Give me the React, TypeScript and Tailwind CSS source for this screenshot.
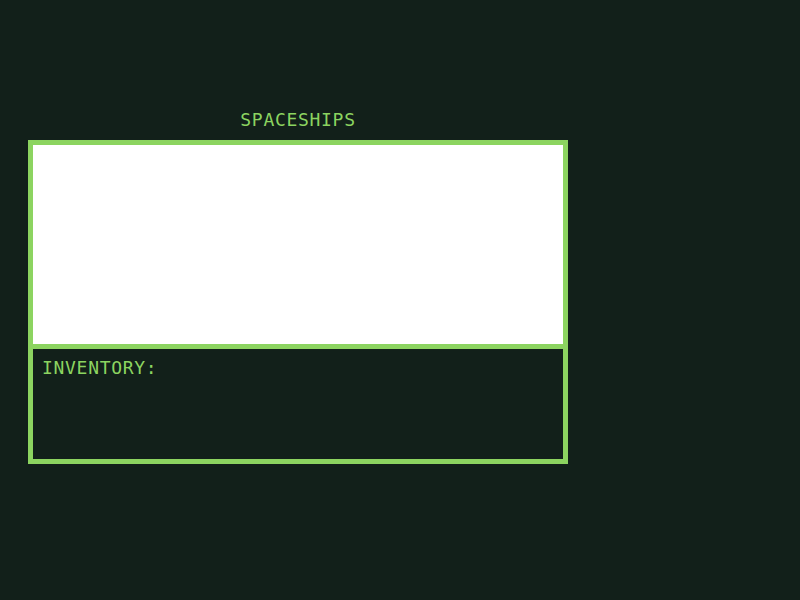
export default function App() {
  return (
    <div className="min-h-screen w-full bg-[#12201a] pt-[111px] pl-[28px]">
      <div className="flex w-[540px] flex-col">
        <h1
          className="h-[18px] text-center text-[18px] leading-[18px] tracking-[0.7px] text-[#8cd460]"
          style={{ fontFamily: "'DejaVu Sans Mono', monospace" }}
        >
          SPACESHIPS
        </h1>

        <div className="mt-[11px] flex flex-col border-[5px] border-[#8cd460]">
          {/* ship view */}
          <div className="h-[199px] bg-white" />

          {/* inventory */}
          <div className="h-[115px] border-t-[5px] border-[#8cd460] bg-[#12201a] pl-[9px] pt-[10px]">
            <p
              className="text-[18px] leading-[18px] tracking-[0.7px] text-[#8cd460]"
              style={{ fontFamily: "'DejaVu Sans Mono', monospace" }}
            >
              INVENTORY:
            </p>
          </div>
        </div>
      </div>
    </div>
  );
}
